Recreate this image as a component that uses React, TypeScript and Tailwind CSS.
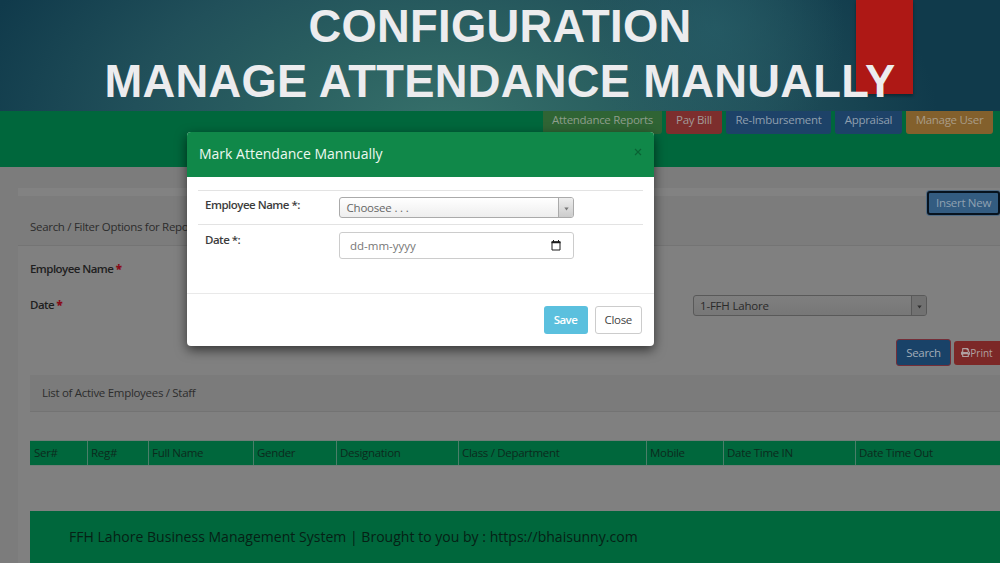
import React from "react";
import { FaPrint } from "react-icons/fa";

const navItems = [
  { label: "Attendance Reports", box: "w-[119px] bg-[#2f6434] text-[#8e9d8c]" },
  { label: "Pay Bill", box: "w-[56px] bg-[#7d2e2d] text-[#a39a98]" },
  { label: "Re-Imbursement", box: "w-[105px] bg-[#1d4268] text-[#8f9fae]" },
  { label: "Appraisal", box: "w-[67px] bg-[#1d4268] text-[#8f9fae]" },
  { label: "Manage User", box: "w-[87px] bg-[#83602c] text-[#a99c87]" },
];

const columns = [
  { label: "Ser#", width: "w-[57px]" },
  { label: "Reg#", width: "w-[61px]" },
  { label: "Full Name", width: "w-[105px]" },
  { label: "Gender", width: "w-[83px]" },
  { label: "Designation", width: "w-[122px]" },
  { label: "Class / Department", width: "w-[188px]" },
  { label: "Mobile", width: "w-[77px]" },
  { label: "Date Time IN", width: "w-[132px]" },
  { label: "Date Time Out", width: "w-[145px]" },
];

function Banner() {
  return (
    <header className="relative h-[111px] shrink-0 overflow-hidden bg-[#103a4b] bg-[radial-gradient(circle_at_715px_30px,rgba(38,92,102,0.75)_0%,rgba(38,92,102,0)_130px),radial-gradient(ellipse_520px_300px_at_445px_130px,#37716b_0%,#2b6161_30%,#21505a_60%,#103a4b_95%)]">
      <div className="absolute left-[856px] top-0 h-[94px] w-[56.5px] bg-[#ae1815] shadow-[0_2px_3px_rgba(0,0,0,0.35)]" />
      <h1 className="relative -top-px text-center font-['Liberation_Sans',sans-serif] text-[45.3px] leading-[55px] font-bold tracking-[0.3px] whitespace-nowrap text-[#ececee]">
        <span className="block">CONFIGURATION</span>
        <span className="block">MANAGE ATTENDANCE MANUALLY</span>
      </h1>
    </header>
  );
}

function Nav() {
  return (
    <nav className="flex h-[56px] shrink-0 items-start justify-end gap-1 bg-[#00673c] pr-[7px]">
      {navItems.map((n) => (
        <span key={n.label} className={`flex h-[23px] items-start justify-center rounded-b-[3px] whitespace-nowrap leading-[18px] ${n.box}`}>
          {n.label}
        </span>
      ))}
    </nav>
  );
}

function Arrow({ className }: { className: string }) {
  return (
    <svg viewBox="0 0 6 5" className={className}>
      <path d="M0.3 0.5H5.7L3 4.5Z" fill="currentColor" />
    </svg>
  );
}

function Page() {
  return (
    <main className="flex h-[396px] flex-col bg-[#7c7c7c] pl-[18px]">
      <div className="h-[21px] shrink-0" />
      <section className="flex grow flex-col bg-[#808080]">
        <div className="flex h-[58px] shrink-0 items-start justify-between border-b border-[#747474] bg-[linear-gradient(#828282_8px,#7c7c7c_8px)] pl-3">
          <span className="pt-[31px] leading-4 text-[#2c2c2c]">Search / Filter Options for Reports</span>
          <span className="mt-[3px] flex h-6 w-[73px] items-center justify-center rounded-[3px] border-2 border-[#07131f] bg-[#335c81] text-[#8fa1b1] shadow-[0_0_0_1px_#506b84]">
            Insert New
          </span>
        </div>
        <div className="flex h-[129px] shrink-0 pl-3">
          <div className="w-[663px] pt-[15px] leading-4 font-semibold tracking-[-0.55px] text-[#202020]">
            <p>Employee Name <b className="text-[#880b18]">*</b></p>
            <p className="mt-5">Date <b className="text-[#880b18]">*</b></p>
          </div>
          <div className="flex grow flex-col pt-[49px]">
            <div className="flex h-[21px] w-[234px] items-stretch overflow-hidden rounded-[3px] border border-[#595959] bg-gradient-to-b from-[#7f7f7f] to-[#777777] text-[#2a2a2a]">
              <span className="grow pl-1.5 leading-[19px] tracking-[-0.2px]">1-FFH Lahore</span>
              <span className="flex w-[15px] items-center justify-center border-l border-[#595959] bg-[#717171]">
                <Arrow className="mt-0.5 h-[4px] w-[5px] text-[#303030]" />
              </span>
            </div>
            <div className="mt-[23px] flex items-center justify-end gap-[3px]">
              <span className="flex h-[27px] w-[55px] items-center justify-center rounded-[3px] border border-[#742e38] bg-[#194268] text-[#a1adb8]">Search</span>
              <span className="flex h-6 w-[46px] items-center justify-center rounded-l-[3px] bg-[#7c2827] text-[10px] tracking-normal text-[#b0a0a0]">
                <FaPrint className="size-[9px]" />Print
              </span>
            </div>
          </div>
        </div>
        <div className="ml-3 flex h-[37px] shrink-0 items-center border-b border-[#737373] bg-[#7b7b7b] pl-3 text-[#2d2d2d]">
          List of Active Employees / Staff
        </div>
        <div className="mt-[28px] ml-3 flex h-[26px] shrink-0 border-y border-[#6f7d77] bg-[#00673c] text-[#0c2a1c]">
          {columns.map((c, i) => (
            <span key={c.label} className={`shrink-0 leading-[24px] ${i ? "border-l border-[#4b7e69] pl-[3px]" : "pl-1"} ${c.width}`}>{c.label}</span>
          ))}
        </div>
        <footer className="mt-[45px] ml-3 flex h-[53px] shrink-0 items-start bg-[#00673c] pt-[17px] pl-[39px] text-[14px] leading-[18px] tracking-[0.025px] text-[#062115]">
          FFH Lahore Business Management System | Brought to you by : https://bhaisunny.com
        </footer>
      </section>
    </main>
  );
}

function Modal() {
  return (
    <div role="dialog" className="absolute left-[187px] top-[132px] flex h-[214px] w-[467px] flex-col overflow-hidden rounded-[4px] bg-white shadow-[0_4px_12px_rgba(0,0,0,0.6)]">
      <div className="flex h-[45px] shrink-0 items-start justify-between bg-[#108849] pr-3 pl-3 text-[14px] tracking-normal text-[#edf8f0]">
        <span className="leading-[44px]">Mark Attendance Mannually</span>
        <svg viewBox="0 0 8 8" className="mt-4 size-[8px]" stroke="#0a6234" strokeWidth="1.1">
          <path d="M1 1L7 7M7 1L1 7" />
        </svg>
      </div>
      <div className="flex h-[117px] shrink-0 flex-col border-b border-[#e9e9e9] px-[11px] pt-[13px]">
        <div className="flex h-[34px] border-t border-[#e3e3e3] pt-[6px] pl-[7px]">
          <span className="w-[134px] leading-4 font-semibold tracking-[-0.5px] text-[#3c3c3c]">Employee Name *:</span>
          <div className="flex h-[21px] w-[235px] overflow-hidden rounded-[3px] border border-[#aaa] bg-gradient-to-b from-white to-[#eeeeee] text-[#666]">
            <span className="grow pl-[6.5px] leading-[19px] tracking-[-0.2px]">Choosee . . .</span>
            <span className="flex w-[15px] items-center justify-center border-l border-[#aaa] bg-gradient-to-b from-[#eee] to-[#ccc]">
              <Arrow className="mt-0.5 h-[4px] w-[5px] text-[#777]" />
            </span>
          </div>
        </div>
        <div className="flex h-[60px] border-t border-[#e3e3e3] pt-[7px] pl-[7px]">
          <span className="w-[134px] leading-4 font-semibold tracking-[-0.5px] text-[#3c3c3c]">Date *:</span>
          <div className="flex h-[27px] w-[235px] items-center justify-between rounded-[3px] border border-[#ccc] pr-3 pl-2.5 tracking-normal text-[#777]">
            <span className="leading-[14px]">dd-mm-yyyy</span>
            <svg viewBox="0 0 10 11" className="h-[11px] w-[10px]" fill="none" stroke="#1c1c1c">
              <path d="M1 2H9V10H1Z" />
              <path d="M0.5 2.2H9.5" strokeWidth="2" />
              <path d="M2.5 0V2M7.5 0V2" />
            </svg>
          </div>
        </div>
      </div>
      <div className="flex items-center justify-end gap-[7px] pt-3 pr-3">
        <span className="flex h-[28px] w-[44px] items-center justify-center rounded-[3px] bg-[#5bc0de] font-semibold tracking-[-0.6px] text-white">Save</span>
        <span className="flex h-[28px] w-[47.5px] items-center justify-center rounded-[3px] border border-[#ccc] text-[#444]">Close</span>
      </div>
    </div>
  );
}

export default function App() {
  return (
    <div className="relative flex h-[563px] w-[1000px] flex-col overflow-hidden font-['Open_Sans','Noto_Sans',sans-serif] text-[11.5px] leading-4 tracking-[-0.3px]">
      <Banner />
      <Nav />
      <Page />
      <Modal />
    </div>
  );
}
